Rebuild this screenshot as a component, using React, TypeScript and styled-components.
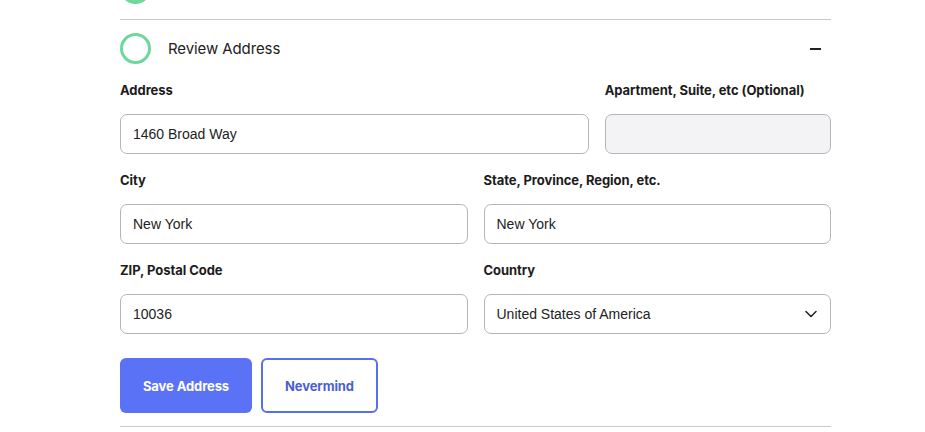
import React from "react";
import styled, { createGlobalStyle } from "styled-components";

const Global = createGlobalStyle`
  html, body { margin: 0; padding: 0; background: #ffffff; }
  body { font-family: "Inter", "Liberation Sans", sans-serif; color: #1c1c1c; }
  * { box-sizing: border-box; }
`;

const Page = styled.div`
  width: 711px;
  margin-left: 120px;
  overflow: hidden;
  height: 432px;
`;

const Step = styled.section<{ $first?: boolean }>`
  border-bottom: 1px solid #c9c9cc;
  margin-top: ${(p) => (p.$first ? "-40px" : "0")};
`;

const StepHeader = styled.div`
  display: flex;
  align-items: center;
  gap: 17px;
  padding: 13px 0 15px;
  height: 59px;
`;

const Circle = styled.span<{ $done?: boolean }>`
  width: 31px;
  height: 31px;
  border-radius: 50%;
  flex: 0 0 auto;
  border: 3px solid #6ed89c;
  background: ${(p) => (p.$done ? "#6ed89c" : "transparent")};
`;

const StepTitle = styled.span`
  flex: 1;
  font-family: "Inter", sans-serif;
  font-size: 15px;
  font-weight: 400;
  color: #1c1c1c;
  letter-spacing: -0.1px;
`;

const Minus = styled.span`
  width: 11px;
  height: 2px;
  background: #222;
  margin-right: 10px;
`;

const Form = styled.div`
  padding: 3px 0 13px;
  display: flex;
  flex-direction: column;
  gap: 18px;
`;

const Row = styled.div<{ $cols: number }>`
  display: grid;
  grid-template-columns: repeat(${(p) => p.$cols}, 1fr);
  column-gap: 16px;
`;

const Field = styled.div<{ $span?: number }>`
  display: flex;
  flex-direction: column;
  gap: 16px;
  grid-column: span ${(p) => p.$span ?? 1};
`;

const Label = styled.label`
  font-family: "Inter", sans-serif;
  font-size: 13px;
  line-height: 16px;
  font-weight: 700;
  color: #1c1c1c;
  letter-spacing: -0.05px;
`;

const Input = styled.input<{ $muted?: boolean }>`
  height: 40px;
  width: 100%;
  border: 1px solid #b5b5b8;
  border-radius: 7px;
  padding: 0 12px;
  font-family: "Liberation Sans", Arial, sans-serif;
  font-size: 14px;
  color: #222;
  background: ${(p) => (p.$muted ? "#f3f3f5" : "#ffffff")};
  outline: none;
`;

const SelectBox = styled.div`
  height: 40px;
  border: 1px solid #b5b5b8;
  border-radius: 7px;
  padding: 0 13px 0 12px;
  display: flex;
  align-items: center;
  justify-content: space-between;
  font-family: "Liberation Sans", Arial, sans-serif;
  font-size: 14px;
  color: #222;
`;

const Buttons = styled.div`
  display: flex;
  gap: 9px;
  margin-top: 6px;
`;

const Button = styled.button<{ $primary?: boolean; $w: number }>`
  width: ${(p) => p.$w}px;
  height: 55px;
  border-radius: 6px;
  font-family: "Inter", sans-serif;
  font-size: 13px;
  font-weight: 700;
  letter-spacing: -0.1px;
  cursor: pointer;
  border: ${(p) => (p.$primary ? "none" : "2px solid #5a70e6")};
  background: ${(p) => (p.$primary ? "#5a73f6" : "#ffffff")};
  color: ${(p) => (p.$primary ? "#ffffff" : "#4a5fd2")};
`;

const Chevron = () => (
  <svg width="12" height="8" viewBox="0 0 12 8" fill="none">
    <path d="M1 1.5 L6 6.5 L11 1.5" stroke="#222" strokeWidth="1.5" strokeLinecap="round" strokeLinejoin="round" />
  </svg>
);

export default function App() {
  return (
    <>
      <Global />
      <Page>
        <Step $first>
          <StepHeader>
            <Circle $done />
            <StepTitle>Verify Shipping Address</StepTitle>
          </StepHeader>
        </Step>
        <Step>
          <StepHeader>
            <Circle />
            <StepTitle>Review Address</StepTitle>
            <Minus />
          </StepHeader>
          <Form>
            <Row $cols={3}>
              <Field $span={2}>
                <Label>Address</Label>
                <Input defaultValue="1460 Broad Way" />
              </Field>
              <Field>
                <Label>Apartment, Suite, etc (Optional)</Label>
                <Input $muted defaultValue="" />
              </Field>
            </Row>
            <Row $cols={2}>
              <Field>
                <Label>City</Label>
                <Input defaultValue="New York" />
              </Field>
              <Field>
                <Label>State, Province, Region, etc.</Label>
                <Input defaultValue="New York" />
              </Field>
            </Row>
            <Row $cols={2}>
              <Field>
                <Label>ZIP, Postal Code</Label>
                <Input defaultValue="10036" />
              </Field>
              <Field>
                <Label>Country</Label>
                <SelectBox>
                  <span>United States of America</span>
                  <Chevron />
                </SelectBox>
              </Field>
            </Row>
            <Buttons>
              <Button $primary $w={132}>Save Address</Button>
              <Button $w={117}>Nevermind</Button>
            </Buttons>
          </Form>
        </Step>
      </Page>
    </>
  );
}
